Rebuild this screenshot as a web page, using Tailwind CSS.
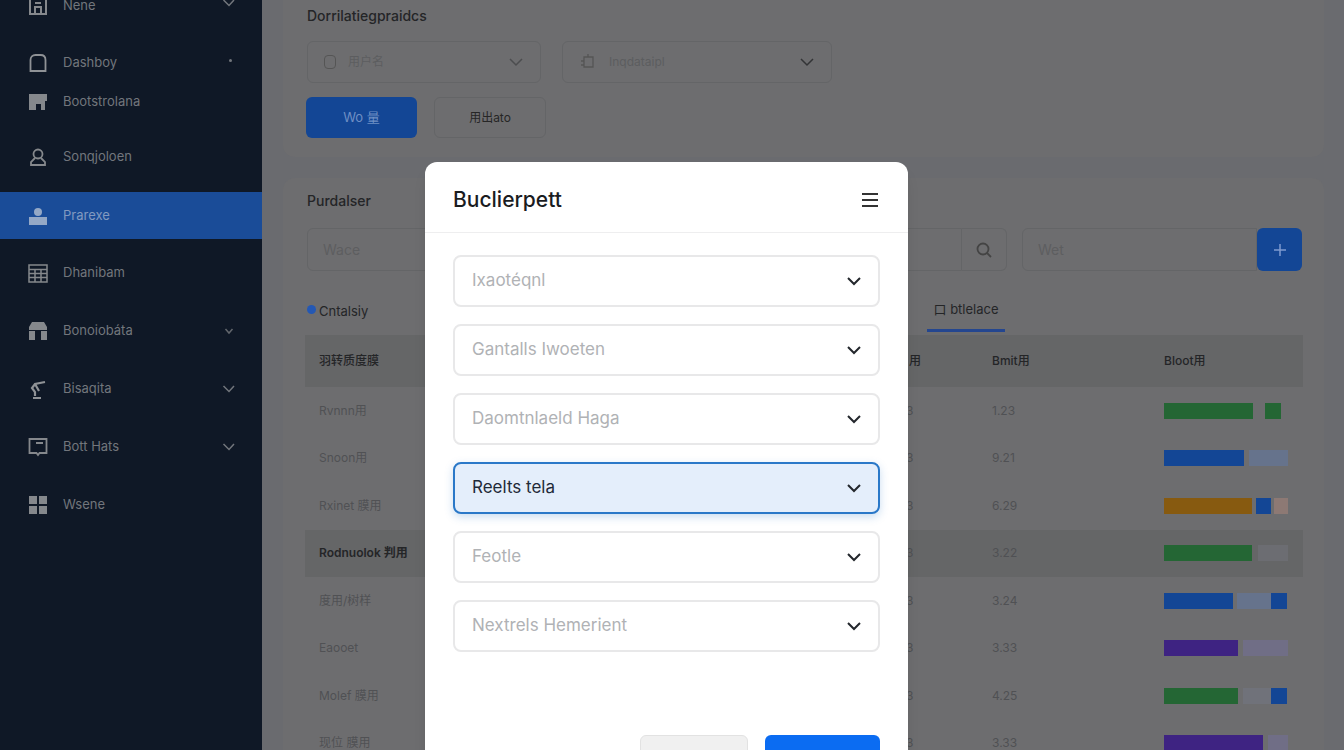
<!DOCTYPE html>
<html lang="en">
<head>
  <meta charset="UTF-8">
  <title>Dashboard</title>
  <script src="https://cdn.jsdelivr.net/npm/@tailwindcss/browser@4"></script>
</head>
<body class="h-screen overflow-hidden bg-[#6a6b6f] font-['Inter','Noto_Sans_CJK_SC',sans-serif]">
  <div class="flex h-[750px] overflow-hidden">
    <!-- Sidebar -->
    <aside class="w-[262px] shrink-0 bg-[#0f1826] text-[13px] text-[#72767c]">
      <div class="flex h-[45px] items-start pl-[28px] pr-[26px] -mt-[5px] pt-[1px]">
        <svg class="mr-[15px] h-[20px] w-[20px]" viewBox="0 0 20 20" fill="none" stroke="#85888c" stroke-width="2"><path d="M2 3h16v15H2z"/><path d="M7 18v-7h6v7M7 7h6"/></svg>
        <span>Nene</span>
        <svg class="ml-auto h-[14px] w-[14px]" viewBox="0 0 14 14" fill="none" stroke="#72767c" stroke-width="1.5"><path d="M1.500 4l5.500 5.500L12 4"/></svg>
      </div>
      <div class="flex h-[39px] items-start pl-[28px] pr-[30px] pt-[13px] box-content">
        <svg class="mr-[15px] h-[20px] w-[20px]" viewBox="0 0 20 20" fill="none" stroke="#8f9296" stroke-width="1.800"><path d="M2.500 18V7c0-3 2-5 5-5h5c3 0 5 2 5 5v11z"/></svg>
        <span>Dashboy</span>
        <span class="ml-auto mt-[6px] h-[3px] w-[3px] rounded-full bg-[#72767c]"></span>
      </div>
      <div class="flex h-[42px] items-start pl-[28px]">
        <svg class="mr-[15px] h-[20px] w-[20px]" viewBox="0 0 20 20" fill="#85888c"><path d="M1 2h18v7h-2v9h-4v-6H8v6H1z"/></svg>
        <span>Bootstrolana</span>
      </div>
      <div class="flex h-[47px] items-center pb-[2px] pl-[28px]">
        <svg class="mr-[15px] h-[20px] w-[20px]" viewBox="0 0 20 20" fill="none" stroke="#85888c" stroke-width="1.800"><circle cx="10" cy="7" r="4.500"/><path d="M7 11l-4 4v3h14v-3l-4-4"/></svg>
        <span>Sonqjoloen</span>
      </div>
      <div class="mt-[11px] flex h-[47px] items-center bg-[#1a4c98] pl-[28px] text-[#829ac0]">
        <svg class="mr-[15px] h-[20px] w-[20px]" viewBox="0 0 20 20" fill="#94a8c6"><circle cx="10" cy="6" r="4"/><path d="M1 11h18v8H1z"/></svg>
        <span>Prarexe</span>
      </div>
      <div class="flex h-[67px] items-center pl-[28px]">
        <svg class="mr-[15px] h-[20px] w-[20px]" viewBox="0 0 20 20" fill="none" stroke="#85888c" stroke-width="1.500"><path d="M1 2h18v17H1zM1 6.500h18M1 10.500h18M1 14.500h18M7 6.500V19M13 6.500V19"/></svg>
        <span>Dhanibam</span>
      </div>
      <div class="flex h-[49px] items-center pl-[28px] pr-[26px]">
        <svg class="mr-[15px] h-[20px] w-[20px]" viewBox="0 0 20 20" fill="#85888c"><path d="M4 1h12l3 5v3H1V6zM1 10h6v9H1zM13 10h6v9h-6z"/></svg>
        <span>Bonoiobáta</span>
        <svg class="ml-auto h-[14px] w-[14px]" viewBox="0 0 14 14" fill="none" stroke="#62666c" stroke-width="1.500"><path d="M3.500 5L7 9l3.500-4"/></svg>
      </div>
      <div class="flex h-[67px] items-center pl-[28px] pr-[26px]">
        <svg class="mr-[15px] h-[20px] w-[20px]" viewBox="0 0 20 20" fill="none" stroke="#8f9296" stroke-width="2.200"><path d="M17 3L7 5l-3 4 3 4v4M5 19h8M7 5l4 7"/></svg>
        <span>Bisaqita</span>
        <svg class="ml-auto h-[14px] w-[14px]" viewBox="0 0 14 14" fill="none" stroke="#72767c" stroke-width="1.500"><path d="M1.500 4l5.500 5.500L12 4"/></svg>
      </div>
      <div class="flex h-[50px] items-center pl-[28px] pr-[26px]">
        <svg class="mr-[15px] h-[20px] w-[20px]" viewBox="0 0 20 20" fill="none" stroke="#85888c" stroke-width="1.800"><path d="M1.500 2h17v14h-7l-1.500 2-1.500-2h-7zM8 6h7"/></svg>
        <span>Bott Hats</span>
        <svg class="ml-auto h-[14px] w-[14px]" viewBox="0 0 14 14" fill="none" stroke="#72767c" stroke-width="1.500"><path d="M1.500 4l5.500 5.500L12 4"/></svg>
      </div>
      <div class="flex h-[66px] items-center pl-[28px]">
        <svg class="mr-[15px] h-[20px] w-[20px]" viewBox="0 0 20 20" fill="#85888c"><path d="M1 1h8v8H1zM11 1h8v8h-8zM1 11h8v8H1zM11 11h8v8h-8z"/></svg>
        <span>Wsene</span>
      </div>
    </aside>

    <!-- Main -->
    <main class="flex-1 px-[21px] text-[13px] text-[#4c4d4f]">
      <section class="h-[157px] rounded-b-xl bg-[#6d6d6f] px-[24px] pt-[7px]">
        <h2 class="text-[14px] leading-[18px] font-medium text-[#242527]">Dorrilatiegpraidcs</h2>
        <div class="mt-[16px] flex gap-[21px]">
          <div class="flex h-[42px] w-[234px] items-center rounded-md border border-[#646567] px-[16px]">
            <span class="mr-[12px] h-[14px] w-[12px] rounded-sm border border-[#555]"></span>
            <span class="text-[12px] text-[#5c5d5f]">用户名</span>
            <svg class="ml-auto h-[16px] w-[16px]" viewBox="0 0 16 16" fill="none" stroke="#4c4d4f" stroke-width="1.500"><path d="M2 5l6 6 6-6"/></svg>
          </div>
          <div class="flex h-[42px] w-[270px] items-center rounded-md border border-[#646567] px-[16px]">
            <svg class="mr-[12px] h-[18px] w-[18px]" viewBox="0 0 18 18" fill="none" stroke="#555" stroke-width="1.300"><path d="M5 4h9v10H5zM2 8h3M2 12h3M9 1v3"/></svg>
            <span class="text-[12px] text-[#5c5d5f]">Inqdataipl</span>
            <svg class="ml-auto h-[16px] w-[16px]" viewBox="0 0 16 16" fill="none" stroke="#333436" stroke-width="1.500"><path d="M2 5l6 6 6-6"/></svg>
          </div>
        </div>
        <div class="mt-[14px] flex gap-[17px]">
          <button class="-ml-[1px] h-[41px] w-[111px] rounded-md bg-[#134695] text-[13px] text-[#6f8fc4]">Wo 量</button>
          <button class="h-[41px] w-[112px] rounded-md border border-[#646567] text-[12px] text-[#262626]">用出ato</button>
        </div>
      </section>

      <section class="mt-[21px] h-[600px] rounded-xl bg-[#6d6d6f] pl-[24px] pr-[21px] pt-[13px]">
        <h2 class="text-[14px] leading-[20px] font-medium text-[#242527]">Purdalser</h2>
        <div class="mt-[17px] flex">
          <div class="h-[43px] w-[655px] rounded-l-md border border-[#646567] px-[15px] text-[14px] leading-[41px] text-[#5d5e60]">Wace</div>
          <div class="flex h-[43px] w-[45px] items-center justify-center rounded-r-md border border-l-0 border-[#646567]">
            <svg class="h-[18px] w-[18px]" viewBox="0 0 18 18" fill="none" stroke="#444" stroke-width="1.800"><circle cx="8" cy="8" r="5.500"/><path d="M12 12l4 4"/></svg>
          </div>
          <div class="ml-[15px] h-[43px] w-[235px] rounded-l-md border border-[#646567] px-[15px] text-[14px] leading-[41px] text-[#5d5e60]">Wet</div>
          <div class="flex h-[43px] w-[45px] items-center justify-center rounded-md bg-[#134695]">
            <svg class="h-[16px] w-[16px]" viewBox="0 0 16 16" fill="none" stroke="#7f9bd0" stroke-width="1.500"><path d="M8 2v12M2 8h12"/></svg>
          </div>
        </div>
        <div class="relative mt-[32px] flex h-[34px] text-[13px] leading-[16px] text-[#242527]">
          <span class="mt-[2px] h-[9px] w-[9px] rounded-full bg-[#2458b4]"></span>
          <span class="ml-[3px]">Cntalsiy</span>
          <div class="absolute left-[620px] top-[-2px] h-[31px] w-[78px] border-b-[3px] border-[#24468f] text-center">口 btlelace</div>
        </div>
        <div id="table" class="-ml-[2px] w-[998px] -mt-[2px] text-[12px]">
          <div class="flex h-[52px] items-center bg-[#656667] pl-[14px] font-medium text-[#242527]">
            <span class="w-[590px]">羽转质度膜</span>
            <span class="w-[83px]">用</span>
            <span class="w-[172px]">Bmit用</span>
            <span>Bloot用</span>
          </div>
        </div>
      </section>
    </main>
  </div>

  <!-- Modal -->
  <div class="absolute left-[425px] top-[162px] h-[620px] w-[483px] rounded-xl bg-white shadow-lg">
    <div class="flex h-[71px] items-center justify-between border-b border-[#eeeeef] pl-[28px] pr-[29px] pt-[5px]">
      <h1 class="text-[21px] font-medium text-[#1a1c1f]">Buclierpett</h1>
      <svg class="h-[18px] w-[18px]" viewBox="0 0 18 18" fill="none" stroke="#333" stroke-width="2"><path d="M1 3h16M1 9h16M1 15h16"/></svg>
    </div>
    <div id="fields" class="mt-[22px] flex flex-col gap-[17px] px-[28px]"></div>
    <div class="mt-[83px] flex justify-end gap-[17px] pr-[28px]">
      <button class="h-[44px] w-[108px] rounded-md border border-[#e2e2e2] bg-[#f0f0f0] text-[14px] text-[#555]">Cancel</button>
      <button class="h-[44px] w-[115px] rounded-md bg-[#0b6cf2] text-[14px] text-white">Submit</button>
    </div>
  </div>

  <script>
    const rows = [
      { name: 'Rvnnn用', val: '1.23', bars: [[89, 'bg-[#246634]'], [12, ''], [16, 'bg-[#246634]']] },
      { name: 'Snoon用', val: '9.21', bars: [[80, 'bg-[#134695]'], [5, ''], [39, 'bg-[#66738c]']] },
      { name: 'Rxinet 膜用', val: '6.29', bars: [[88, 'bg-[#875a10]'], [4, ''], [15, 'bg-[#134695]'], [3, ''], [14, 'bg-[#8d7974]']] },
      { name: 'Rodnuolok 判用', val: '3.22', bars: [[88, 'bg-[#246634]'], [6, ''], [30, 'bg-[#6c6d72]']], strong: true },
      { name: '度用/树样', val: '3.24', bars: [[69, 'bg-[#134695]'], [4, ''], [34, 'bg-[#66738c]'], [16, 'bg-[#134695]']] },
      { name: 'Eaooet', val: '3.33', bars: [[74, 'bg-[#3e2382]'], [5, ''], [45, 'bg-[#706e86]']] },
      { name: 'Molef 膜用', val: '4.25', bars: [[74, 'bg-[#246634]'], [5, ''], [28, 'bg-[#70727a]'], [16, 'bg-[#134695]']] },
      { name: '现位 膜用', val: '3.33', bars: [[99, 'bg-[#3e2382]'], [5, ''], [20, 'bg-[#706e86]']] },
    ];

    const table = document.getElementById('table');
    rows.forEach(row => {
      const el = document.createElement('div');
      el.className = 'flex h-[47.500px] items-center pl-[14px] text-[#505154]' + (row.strong ? ' bg-[#656667]' : '');
      const bars = row.bars.map(([w, cls]) => `<span class="h-[16px] ${cls}" style="width:${w}px"></span>`).join('');
      el.innerHTML = `
        <span class="w-[587px] ${row.strong ? 'font-semibold text-[#242527]' : ''}">${row.name}</span>
        <span class="w-[86px]">3</span>
        <span class="w-[172px]">${row.val}</span>
        <span class="flex">${bars}</span>`;
      table.appendChild(el);
    });

    const fields = ['Ixaotéqnl', 'Gantalls Iwoeten', 'Daomtnlaeld Haga', 'Reelts tela', 'Feotle', 'Nextrels Hemerient'];
    const box = document.getElementById('fields');
    fields.forEach((label, i) => {
      const active = i === 3;
      const el = document.createElement('div');
      el.className = 'flex h-[52px] items-center justify-between rounded-lg border pl-[17px] pr-[16px] text-[17px] ' +
        (active ? 'border-2 border-[#2a78c8] bg-[#e4eefb] text-[16px] text-[#1f2a38] shadow-[0_3px_8px_rgba(42,120,200,0.25)]' : 'border-2 border-[#e8e8e9] bg-white text-[#b0b2b5]');
      el.innerHTML = `<span>${label}</span>
        <svg class="h-[16px] w-[16px]" viewBox="0 0 16 16" fill="none" stroke="#23272c" stroke-width="2"><path d="M2 5l6 6 6-6"/></svg>`;
      box.appendChild(el);
    });
  </script>
</body>
</html>
